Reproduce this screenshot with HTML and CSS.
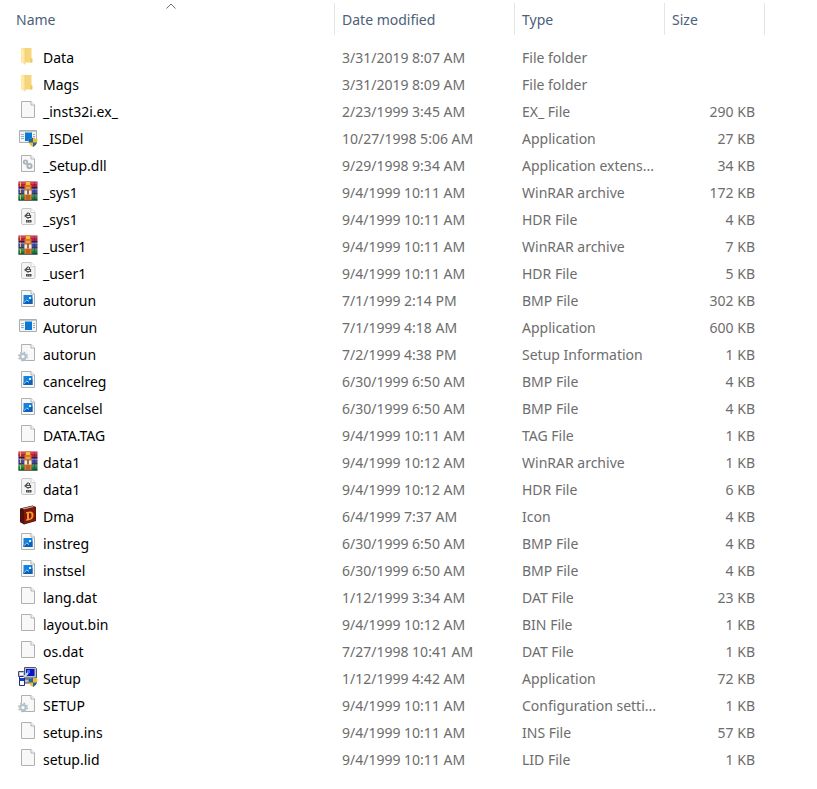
FILE: index.html
```html
<!DOCTYPE html>
<html lang="en">
<head>
<meta charset="utf-8">
<title>Files</title>
<link rel="stylesheet" href="styles.css">
</head>
<body>
<svg class="sprites" aria-hidden="true">
  <symbol id="folder" viewBox="0 0 20 20">
    <path d="M5 2h8.500v10.500h.8v4H5z" fill="#f7d57a"/>
    <path d="M12.500 12.500h1.800v4h-1.800z" fill="#edc65c"/>
    <path d="M3 2h1.500l2.500 2v14.500L3 16.500z" fill="#ffe9a6"/>
    <path d="M7 4v14.500" stroke="#efca68" stroke-width=".6"/>
  </symbol>
  <symbol id="page" viewBox="0 0 20 20">
    <path d="M3.500 1.500h9.500l3.500 3.500v12.500h-13z" fill="#f8f8f8" stroke="#b0b0b0"/>
    <path d="M13 1.500V5h3.500" fill="#fff" stroke="#b0b0b0"/>
  </symbol>
  <symbol id="window" viewBox="0 0 20 20">
    <path d="M1.500 3.500h17v12h-17z" fill="#f1f3f4" stroke="#a9b0b4"/>
    <path d="M2 4.500h16" stroke="#c5cbce"/>
    <path d="M7 5.500h7V14H7z" fill="#0878d4"/>
    <path d="M3 7.500h3M3 9.500h3M3 11.500h3M15 7.500h2M15 9.500h2M15 11.500h2" stroke="#9cadb7"/>
  </symbol>
  <symbol id="shield" viewBox="0 0 20 20">
    <path d="M15 10.500q2 1.500 4.500 1.500c0 4-1 6.200-4.500 8-3.500-1.800-4.500-4-4.500-8q2.500 0 4.500-1.500z" fill="#f8ba26"/>
    <path d="M15 10.500V15.500h-4.100q-.5-1.500-.4-3.500 2.500 0 4.500-1.500zM15 15.500h4.100q-.8 3-4.100 4.500z" fill="#176ba9"/>
  </symbol>
  <symbol id="installer" viewBox="0 0 20 20">
    <use href="#window"/><use href="#shield"/>
  </symbol>
  <symbol id="library" viewBox="0 0 20 20">
    <use href="#page"/>
    <circle cx="7.500" cy="8" r="1.800" fill="#d4dade" stroke="#a9b1b6" stroke-width="1.600"/>
    <circle cx="11.500" cy="12" r="2.200" fill="#d4dade" stroke="#a9b1b6" stroke-width="1.800"/>
    <circle cx="7.500" cy="8" r=".6" fill="#fff"/><circle cx="11.500" cy="12" r=".8" fill="#fff"/>
  </symbol>
  <symbol id="archive" viewBox="0 0 20 20">
    <path d="M.5.500h19v6H.5q-.5-3 0-6z" fill="#b81f43"/>
    <path d="M.5 7h19v6H.5q-.5-3 0-6z" fill="#454a9f"/>
    <path d="M.5 13.500h19v6H.5q-.5-3 0-6z" fill="#148044"/>
    <path d="M1 2h18" stroke="#e56b82"/>
    <path d="M1 8.500h18" stroke="#7c83c8"/>
    <path d="M1 15h18" stroke="#4cb06d"/>
    <path d="M.5 6.500h19M.5 13h19M.5 19h19" stroke="#31202d"/>
    <path d="M2.500 1v4.500M2.500 7.500V12M2.500 14v4.500" stroke="#e8bd36"/>
    <path d="M16.500 1v18" stroke="#42263a" stroke-opacity=".4"/>
    <path d="M7.500.500h5v3l1 1V19h-7V4.500l1-1z" fill="#d9772a"/>
    <path d="M8 1h4v3H8z" fill="#f4c12d"/>
    <path d="M8 6h4v2H8z" fill="#f0a14f"/>
    <path d="M6.500 9.500h7v4h-7z" fill="#f2ece5"/>
    <path d="M9 8.500h2v5H9z" fill="#9c654c"/>
    <path d="M8 14h4v5H8z" fill="#c95b1c"/>
  </symbol>
  <symbol id="header" viewBox="0 0 20 20">
    <path d="M5 .5h8l4 4V15q0 1.500-1.500 1.500H5q-1.500 0-1.500-1.500V2Q3.500.5 5 .5z" fill="#f4f4f4" stroke="#c7c7c7"/>
    <path d="M13 .5v4h4" fill="#fff" stroke="#d2d2d2"/>
    <path d="M10.500 4.500L7 8l3.500 2.500M8 7.500h5M11.500 5v2.500M9 9.500h3.500V7" fill="none" stroke="#4d4d4d" stroke-width="1.200"/>
    <path d="M8 12h5.500v2.500H8z" fill="#4b4b4b"/>
    <path d="M9.500 12.500v1.500M11.500 12.500v1.500" stroke="#bbb" stroke-width=".6"/>
  </symbol>
  <symbol id="image" viewBox="0 0 20 20">
    <use href="#page"/>
    <path d="M5.500 6h9v9h-9z" fill="#1782de"/>
    <path d="M5.500 15v-2l3-2.500 2 1.500 4-3v6z" fill="#0c60b5"/>
    <path d="M6 13.500l2.800-2.500 2 1.500" fill="none" stroke="#a5dcff"/>
    <path d="M11 8h2v2h-2z" fill="#d9f1ff"/>
  </symbol>
  <symbol id="config" viewBox="0 0 20 20">
    <use href="#page"/>
    <circle cx="5" cy="13.500" r="4.200" fill="none" stroke="#b5c0c7" stroke-width="1.800" stroke-dasharray="1.700 1.600"/>
    <circle cx="5" cy="13.500" r="2.700" fill="#fff" stroke="#b5c2ca" stroke-width="2.200"/>
  </symbol>
  <symbol id="book" viewBox="0 0 20 20">
    <path d="M2 3.500L14.500.5 18 2v14L6 19.500 2 17z" fill="#4c1009"/>
    <path d="M4 3.500L14.500 1 16.500 2 6 4.500z" fill="#b99a83"/>
    <path d="M6 5l11.500-2.800v13.500L6 18.700z" fill="#80160e"/>
    <path d="M2 4l4 1.500v13L2 17z" fill="#56100b"/>
    <path d="M8 7.200l2.500-.5q5-1 5 3.500 0 4-4.500 5l-3 .6v-1.300l1-.2V8.300l-1 .2zM11 8.200v5.500q2.500-.4 2.500-3.500 0-2.600-2.500-2z" fill="#f59b29" fill-rule="evenodd"/>
  </symbol>
  <symbol id="setup" viewBox="0 0 20 20">
    <path d="M6.500.5h11l1 1v9.500h-12z" fill="#bebec2" stroke="#555464"/>
    <path d="M8 2h8.500v7H8z" fill="#0714c9"/>
    <path d="M9 3h3v3H9z" fill="#3e70ff"/>
    <path d="M6.500 12H17v4H6.500z" fill="#c2c2c4" stroke="#44445a"/>
    <path d="M.5 4.500h5l1 1v4h-6z" fill="#bbc7da" stroke="#454775"/>
    <path d="M2 6h3v2H2z" fill="#fff"/>
    <path d="M1.500 9.500h5v9h-5z" fill="#fff" stroke="#282a77"/>
    <path d="M2 11h4v3H2z" fill="#183fd1"/>
    <path d="M6 10l4-4" stroke="#bfe2ee" stroke-width="2"/>
    <use href="#shield"/>
  </symbol>
</svg>
<main>
<table class="files">
  <colgroup><col><col class="col-date"><col class="col-type"><col class="col-size"></colgroup>
  <thead>
    <tr>
      <th scope="col" aria-sort="ascending"><div class="heading">Name<svg class="sort" viewBox="0 0 10 6" aria-hidden="true"><path d="M.5 5.500L5 1l4.500 4.500"/></svg></div></th>
      <th scope="col"><div class="heading">Date modified</div></th>
      <th scope="col"><div class="heading">Type</div></th>
      <th scope="col"><div class="heading">Size</div></th>
    </tr>
  </thead>
  <tbody>
    <tr><td><svg class="icon"><use href="#folder"/></svg>Data</td><td>3/31/2019 8:07 AM</td><td>File folder</td><td></td></tr>
    <tr><td><svg class="icon"><use href="#folder"/></svg>Mags</td><td>3/31/2019 8:09 AM</td><td>File folder</td><td></td></tr>
    <tr><td><svg class="icon"><use href="#page"/></svg>_inst32i.ex_</td><td>2/23/1999 3:45 AM</td><td>EX_ File</td><td>290 KB</td></tr>
    <tr><td><svg class="icon"><use href="#installer"/></svg>_ISDel</td><td>10/27/1998 5:06 AM</td><td>Application</td><td>27 KB</td></tr>
    <tr><td><svg class="icon"><use href="#library"/></svg>_Setup.dll</td><td>9/29/1998 9:34 AM</td><td>Application extens...</td><td>34 KB</td></tr>
    <tr><td><svg class="icon"><use href="#archive"/></svg>_sys1</td><td>9/4/1999 10:11 AM</td><td>WinRAR archive</td><td>172 KB</td></tr>
    <tr><td><svg class="icon"><use href="#header"/></svg>_sys1</td><td>9/4/1999 10:11 AM</td><td>HDR File</td><td>4 KB</td></tr>
    <tr><td><svg class="icon"><use href="#archive"/></svg>_user1</td><td>9/4/1999 10:11 AM</td><td>WinRAR archive</td><td>7 KB</td></tr>
    <tr><td><svg class="icon"><use href="#header"/></svg>_user1</td><td>9/4/1999 10:11 AM</td><td>HDR File</td><td>5 KB</td></tr>
    <tr><td><svg class="icon"><use href="#image"/></svg>autorun</td><td>7/1/1999 2:14 PM</td><td>BMP File</td><td>302 KB</td></tr>
    <tr><td><svg class="icon"><use href="#window"/></svg>Autorun</td><td>7/1/1999 4:18 AM</td><td>Application</td><td>600 KB</td></tr>
    <tr><td><svg class="icon"><use href="#config"/></svg>autorun</td><td>7/2/1999 4:38 PM</td><td>Setup Information</td><td>1 KB</td></tr>
    <tr><td><svg class="icon"><use href="#image"/></svg>cancelreg</td><td>6/30/1999 6:50 AM</td><td>BMP File</td><td>4 KB</td></tr>
    <tr><td><svg class="icon"><use href="#image"/></svg>cancelsel</td><td>6/30/1999 6:50 AM</td><td>BMP File</td><td>4 KB</td></tr>
    <tr><td><svg class="icon"><use href="#page"/></svg>DATA.TAG</td><td>9/4/1999 10:11 AM</td><td>TAG File</td><td>1 KB</td></tr>
    <tr><td><svg class="icon"><use href="#archive"/></svg>data1</td><td>9/4/1999 10:12 AM</td><td>WinRAR archive</td><td>1 KB</td></tr>
    <tr><td><svg class="icon"><use href="#header"/></svg>data1</td><td>9/4/1999 10:12 AM</td><td>HDR File</td><td>6 KB</td></tr>
    <tr><td><svg class="icon"><use href="#book"/></svg>Dma</td><td>6/4/1999 7:37 AM</td><td>Icon</td><td>4 KB</td></tr>
    <tr><td><svg class="icon"><use href="#image"/></svg>instreg</td><td>6/30/1999 6:50 AM</td><td>BMP File</td><td>4 KB</td></tr>
    <tr><td><svg class="icon"><use href="#image"/></svg>instsel</td><td>6/30/1999 6:50 AM</td><td>BMP File</td><td>4 KB</td></tr>
    <tr><td><svg class="icon"><use href="#page"/></svg>lang.dat</td><td>1/12/1999 3:34 AM</td><td>DAT File</td><td>23 KB</td></tr>
    <tr><td><svg class="icon"><use href="#page"/></svg>layout.bin</td><td>9/4/1999 10:12 AM</td><td>BIN File</td><td>1 KB</td></tr>
    <tr><td><svg class="icon"><use href="#page"/></svg>os.dat</td><td>7/27/1998 10:41 AM</td><td>DAT File</td><td>1 KB</td></tr>
    <tr><td><svg class="icon"><use href="#setup"/></svg>Setup</td><td>1/12/1999 4:42 AM</td><td>Application</td><td>72 KB</td></tr>
    <tr><td><svg class="icon"><use href="#config"/></svg>SETUP</td><td>9/4/1999 10:11 AM</td><td>Configuration setti...</td><td>1 KB</td></tr>
    <tr><td><svg class="icon"><use href="#page"/></svg>setup.ins</td><td>9/4/1999 10:11 AM</td><td>INS File</td><td>57 KB</td></tr>
    <tr><td><svg class="icon"><use href="#page"/></svg>setup.lid</td><td>9/4/1999 10:11 AM</td><td>LID File</td><td>1 KB</td></tr>
  </tbody>
</table>
</main>
</body>
</html>
```
FILE: styles.css
```css
body {
  margin: 0;
  background: #fff;
  font: 14px/27px "Noto Sans", "Open Sans", sans-serif;
  color: #6d6d6d;
}

.sprites {
  position: absolute;
  width: 0;
  height: 0;
}

main {
  padding-right: 52px;
}

.files {
  width: 100%;
  table-layout: fixed;
  border-collapse: collapse;
}

.col-date { width: 180px; }
.col-type { width: 150px; }
.col-size { width: 100px; }

th {
  padding: 3px 0 9px;
  font-weight: 400;
  text-align: left;
  color: #4c607a;
}

.heading {
  position: relative;
  height: 32px;
  padding-left: 7px;
  border-right: 1px solid #e5e5e5;
  line-height: 34px;
}

th:first-child .heading {
  padding-left: 16px;
}

.sort {
  position: absolute;
  top: 0;
  left: 50%;
  width: 10px;
  height: 6px;
  margin-left: -1px;
  fill: none;
  stroke: #6d6d6d;
}

td {
  height: 27px;
  padding: 0 0 0 7px;
  white-space: nowrap;
}

td:first-child {
  padding-left: 18px;
  color: #000;
}

td:last-child {
  padding-right: 10px;
  text-align: right;
}

.icon {
  width: 20px;
  height: 20px;
  margin: 2px 5px 0 0;
  vertical-align: top;
}
```
